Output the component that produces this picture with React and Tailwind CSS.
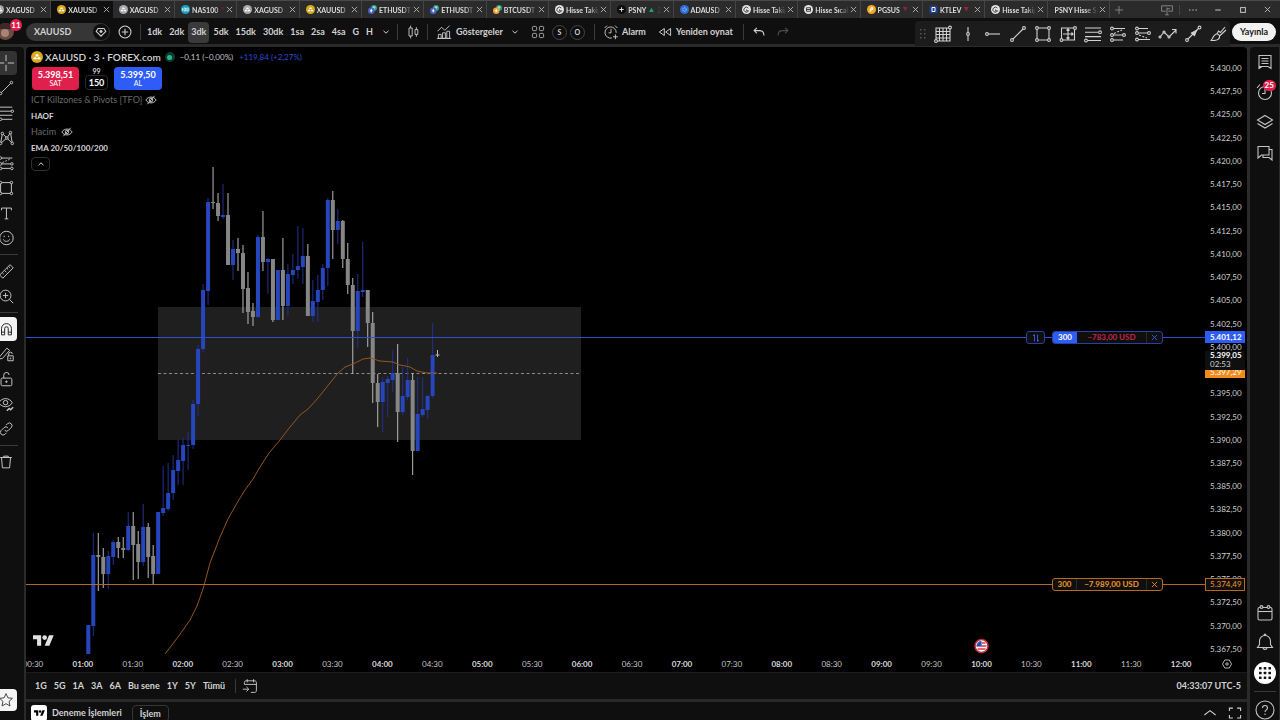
import React, { useState } from 'react';
import clsx from 'clsx';

const TABS = [
    { name: 'XAGUSD', icon: 'silver', trend: 'up' },
    { name: 'XAUUSD', icon: 'gold', trend: 'up', active: true },
    { name: 'XAGUSD', icon: 'silver', trend: 'up' },
    { name: 'NAS100', icon: 'nas', trend: 'down' },
    { name: 'XAGUSD', icon: 'silver', trend: 'up' },
    { name: 'XAUUSD', icon: 'gold', trend: 'up' },
    { name: 'ETHUSDT', icon: 'eth' },
    { name: 'ETHUSDT', icon: 'eth' },
    { name: 'BTCUSDT', icon: 'btc' },
    { name: 'Hisse Takip', icon: 'ring' },
    { name: 'PSNY', icon: 'psny', trend: 'up', extra: '22' },
    { name: 'ADAUSD', icon: 'ada', trend: 'down' },
    { name: 'Hisse Takip', icon: 'ring' },
    { name: 'Hisse Sıcak', icon: 'lines' },
    { name: 'PGSUS', icon: 'pgsus', trend: 'down', extra: '-' },
    { name: 'KTLEV', icon: 'ktlev', trend: 'down', extra: '3' },
    { name: 'Hisse Takip', icon: 'ring' },
    { name: 'PSNY Hisse Sen' },
];

const INTERVALS = ['1dk', '2dk', '3dk', '5dk', '15dk', '30dk', '1sa', '2sa', '4sa', 'G', 'H'];
const RANGES = ['1G', '5G', '1A', '3A', '6A', 'Bu sene', '1Y', '5Y', 'Tümü'];

const PRICES = Array.from({ length: 26 }, (_, i) => {
    const value = (5430 - i * 2.5).toFixed(2);
    return `${value[0]}.${value.slice(1, 4)},${value.slice(5)}`;
});

const TIMES = Array.from({ length: 24 }, (_, i) => {
    const hour = String(Math.floor((i + 1) / 2)).padStart(2, '0');
    return `${hour}:${i % 2 === 0 ? '30' : '00'}`;
});

// [high, body top, body bottom, low, 1 = up / 0 = down]
const CANDLES = [
    [625, 625, 654, 654, 1], [533, 555, 626, 636, 1], [533, 555, 557, 591, 0], [548, 557, 574, 588, 0],
    [551, 556, 574, 589, 1], [540, 542, 557, 565, 1], [537, 542, 548, 558, 0], [537, 548, 550, 558, 0],
    [512, 526, 550, 551, 1], [512, 526, 545, 580, 0], [531, 544, 562, 579, 0], [504, 527, 562, 566, 1],
    [523, 527, 557, 578, 0], [545, 556, 574, 585, 0], [512, 512, 574, 574, 1], [466, 508, 513, 516, 1],
    [463, 493, 509, 511, 1], [455, 470, 493, 500, 1], [440, 460, 471, 485, 1], [438, 445, 461, 485, 1],
    [432, 445, 446, 470, 1], [400, 404, 445, 449, 1], [345, 349, 404, 416, 1], [284, 290, 349, 352, 1],
    [198, 202, 291, 305, 1], [167, 202, 203, 209, 0], [193, 203, 216, 221, 0], [184, 215, 217, 219, 1],
    [193, 215, 265, 265, 0], [240, 249, 265, 280, 1], [238, 249, 253, 271, 0], [245, 253, 289, 313, 0],
    [272, 288, 312, 324, 0], [303, 311, 317, 326, 0], [235, 237, 317, 318, 1], [211, 237, 262, 271, 0],
    [258, 259, 262, 294, 1], [259, 259, 320, 322, 0], [270, 270, 320, 320, 1], [238, 270, 306, 320, 0],
    [264, 274, 306, 316, 1], [254, 270, 275, 284, 1], [226, 266, 270, 279, 1], [228, 256, 267, 284, 1],
    [244, 256, 316, 316, 0], [280, 301, 316, 322, 1], [275, 290, 302, 322, 1], [264, 268, 290, 300, 1],
    [198, 200, 268, 286, 1], [191, 200, 230, 259, 0], [209, 221, 230, 244, 1], [220, 221, 259, 268, 0],
    [243, 259, 285, 294, 0], [278, 285, 331, 374, 0], [274, 291, 331, 348, 1], [242, 290, 292, 297, 1],
    [290, 290, 323, 347, 0], [312, 323, 383, 403, 0], [374, 383, 402, 427, 0], [377, 382, 402, 432, 1],
    [376, 379, 383, 417, 1], [350, 373, 380, 392, 1], [344, 373, 412, 442, 0], [367, 396, 412, 415, 1],
    [358, 380, 397, 400, 1], [373, 380, 451, 475, 0], [377, 414, 451, 451, 1], [377, 409, 415, 417, 1],
    [395, 396, 410, 419, 1], [323, 355, 396, 398, 1],
];

const EMA = [
    [165, 654], [178, 637], [190, 620], [197, 606], [203, 589], [210, 563], [220, 537], [228, 519], [237, 503],
    [245, 490], [253, 479], [260, 467], [269, 453], [280, 440], [290, 427], [300, 415], [308, 409], [318, 398],
    [330, 383], [338, 373], [345, 367], [353, 364], [363, 359], [370, 358], [380, 361], [393, 362], [400, 365],
    [410, 367], [417, 371], [427, 373], [437, 373],
];

const Icon = ({ size = 'size-5', children, className }) => (
    <svg
        viewBox="0 0 20 20"
        className={clsx(size, 'shrink-0', className)}
        fill="none"
        stroke="currentColor"
        strokeWidth="1.1"
        aria-hidden="true"
    >
        {children}
    </svg>
);

const Dot = ({ x, y, r = 1.4 }) => <circle cx={x} cy={y} r={r} fill="#0f0f0f" />;

const Cross = ({ className }) => (
    <svg viewBox="0 0 8 8" className={clsx('size-[7px] shrink-0', className)} stroke="currentColor" fill="none" aria-hidden="true">
        <path d="M1 1l6 6M7 1L1 7" />
    </svg>
);

const Chevron = ({ up }) => (
    <svg viewBox="0 0 8 8" className="size-2 shrink-0" stroke="currentColor" fill="none" aria-hidden="true">
        <path d={up ? 'M1.5 5.2L4 2.8l2.5 2.4' : 'M1.5 2.8L4 5.2l2.5-2.4'} />
    </svg>
);

const Logo = ({ className }) => (
    <svg viewBox="0 0 36 18" className={className} fill="currentColor" aria-hidden="true">
        <path d="M14 18H7V7H0V0h14v18zM28 18h-8l7.500-18h8L28 18z" />
        <circle cx="20" cy="4" r="4" />
    </svg>
);

const Metal = ({ color, className }) => (
    <svg viewBox="0 0 18 18" className={className} aria-hidden="true">
        <circle cx="9" cy="9" r="9" fill={color} />
        <path d="M7.300 5h3.400l1.100 3.200H6.200zM4.300 9.300h3.600l1 3.200H3.200zM10.100 9.300h3.600l1.100 3.200H9.100z" fill="#fff" />
    </svg>
);

const TabIcon = ({ kind }) => {
    const box = 'size-[9px] shrink-0';
    if (kind === 'silver') return <Metal color="#a9a9ad" className={box} />;
    if (kind === 'gold') return <Metal color="#d9a81c" className={box} />;
    return (
        <svg viewBox="0 0 18 18" className={box} aria-hidden="true">
            {kind === 'nas' && (
                <>
                    <circle cx="9" cy="9" r="9" fill="#1a9fc0" />
                    <path d="M3 6v6M6 6h3v6H6zM11.500 6h3v6h-3z" fill="none" stroke="#fff" strokeWidth="1.300" />
                </>
            )}
            {(kind === 'eth' || kind === 'btc') && (
                <>
                    <circle cx="12" cy="6" r="6" fill="#2aa383" />
                    <path d="M9 4h6M12 4v5" stroke="#fff" strokeWidth="1.500" />
                    <circle cx="6.500" cy="11.500" r="6.500" fill={kind === 'eth' ? '#4a63c8' : '#f3a12f'} />
                    <path d="M6.500 7.500l2.500 4-2.500 3.500L4 11.500z" fill="#fff" />
                </>
            )}
            {kind === 'ring' && (
                <>
                    <circle cx="9" cy="9" r="9" fill="#e4e4e4" />
                    <path d="M12.500 6a5 5 0 1 0 .8 5.500H9V9" fill="none" stroke="#333" strokeWidth="1.800" />
                </>
            )}
            {kind === 'lines' && (
                <>
                    <circle cx="9" cy="9" r="9" fill="#e4e4e4" />
                    <path d="M5 5.500h8v7H5zM5 9h8" fill="none" stroke="#333" strokeWidth="1.800" />
                </>
            )}
            {kind === 'psny' && (
                <>
                    <circle cx="9" cy="9" r="9" fill="#0c0c0c" />
                    <path d="M4.500 9h9M9 4.500v9" stroke="#ddd" strokeWidth="2" />
                </>
            )}
            {kind === 'ada' && (
                <>
                    <circle cx="9" cy="9" r="9" fill="#2f6fd6" />
                    <circle cx="9" cy="9" r="3.500" fill="none" stroke="#cfe0ff" strokeWidth="2" strokeDasharray="2 1.500" />
                </>
            )}
            {kind === 'pgsus' && (
                <>
                    <circle cx="9" cy="9" r="9" fill="#f4a720" />
                    <path d="M6 14c1-6 2-9 4-9s3 4-2 5" fill="none" stroke="#fff" strokeWidth="2.200" />
                </>
            )}
            {kind === 'ktlev' && (
                <>
                    <rect x="1" y="1" width="16" height="16" rx="3" fill="#1d3f92" />
                    <path d="M6 5h6v8H6z" fill="none" stroke="#fff" strokeWidth="2" />
                </>
            )}
        </svg>
    );
};

const TitleBar = () => (
    <header className="flex h-[18px] shrink-0 border-t border-[#4a4a4a] bg-[#2b2b2b] text-[#b8b8b8]">
        <div className="-ml-[11px] flex min-w-0 flex-1">
            {TABS.map((tab, idx) => (
                <div
                    key={idx}
                    className={clsx(
                        'flex min-w-0 flex-1 basis-0 items-center gap-px pr-[3px] pl-[6px]',
                        tab.active ? 'bg-[#0f0f0f]' : 'border-r border-[#444]'
                    )}
                >
                    {tab.icon && <TabIcon kind={tab.icon} />}
                    <a
                        href="#"
                        className="flex min-w-0 flex-1 items-center gap-[3px] overflow-hidden mask-r-from-70% pl-px text-[7px] leading-3 font-bold whitespace-nowrap text-[#dedede]"
                    >
                        {tab.name}
                        {tab.trend && (
                            <svg viewBox="0 0 6 6" className="size-[5px] shrink-0" aria-hidden="true">
                                {tab.trend === 'up' ? <path d="M0 6h6L3 1z" fill="#1f9d78" /> : <path d="M0 0h6L3 5z" fill="#e0223c" />}
                            </svg>
                        )}
                        {tab.extra && <span className="font-normal text-[#8a8a8a]">{tab.extra}</span>}
                    </a>
                    <button type="button" aria-label="Sekmeyi kapat"><Cross /></button>
                </div>
            ))}
        </div>
        <div className="flex w-[170px] shrink-0 items-center text-[#8a8a8a]">
            <button type="button" aria-label="Yeni sekme" className="flex w-[18px] justify-center">
                <Icon size="size-2"><path d="M10 0v20M0 10h20" strokeWidth="2.200" /></Icon>
            </button>
            <button type="button" aria-label="Ekran" className="ml-[30px] flex w-[18px] justify-center">
                <Icon size="size-3"><path d="M8 12H1V3h18v9h-7M10 6v12M7 18h6M10 8h5" strokeWidth="1.500" /></Icon>
            </button>
            <span className="ml-[3px] h-2.5 w-px bg-[#444]" />
            <button type="button" aria-label="Menü" className="flex w-[25px] justify-center">
                <Icon size="size-2.5"><path d="M2 10h3M8.500 10h3M15 10h3" strokeWidth="3" /></Icon>
            </button>
            <button type="button" aria-label="Küçült" className="flex w-[25px] justify-center text-[#c4c4c4]">
                <Icon size="size-2"><path d="M3 10h14" strokeWidth="2.500" /></Icon>
            </button>
            <button type="button" aria-label="Büyüt" className="flex w-[25px] justify-center text-[#c4c4c4]">
                <Icon size="size-2"><rect x="4" y="4" width="12" height="12" strokeWidth="2.500" /></Icon>
            </button>
            <button type="button" aria-label="Kapat" className="flex w-[25px] justify-center text-[#c4c4c4]"><Cross /></button>
        </div>
    </header>
);

const GRID_TOOLS = [
    { label: 'Izgara', art: <><path d="M3 4h14v13H3zM6.500 4v13M10 4v13M13.500 4v13M3 7.500h14M3 10.500h14M3 14h14" /><Dot x={17} y={3.500} /><Dot x={3} y={17} /></> },
    { label: 'Dikey çizgi', art: <><path d="M10 3v14" /><Dot x={10} y={10} /></> },
    { label: 'Yatay ışın', art: <><path d="M4 10h13" /><Dot x={4} y={10} /></> },
    { label: 'Trend çizgisi', art: <><path d="M4 16L16 4" /><Dot x={4} y={16} /><Dot x={16} y={4} /></> },
    { label: 'Dikdörtgen', art: <><path d="M4 4h12v12H4z" /><Dot x={4} y={4} /><Dot x={16} y={4} /><Dot x={4} y={16} /><Dot x={16} y={16} /></> },
    { label: 'Fiyat aralığı', art: <><path d="M3.500 4h13v12h-13zM10 5v10M5 10h10M8.500 6.500L10 5l1.500 1.500M8.500 13.500L10 15l1.500-1.500M13.500 8.500L15 10l-1.500 1.500" /><Dot x={17} y={4} /><Dot x={3.500} y={16} /></> },
    { label: 'Fib düzeltmesi', art: <><path d="M2 4h16M2 8.300h13M2 12.600h16M5 16.500h13" /><Dot x={17} y={8.300} /><Dot x={3} y={16.500} /></> },
    { label: 'Uzun pozisyon', art: <><path d="M4 4.500h13M4 11h11M4 16h11" /><path d="M6 9.500l8-3.500" strokeDasharray="2 1.500" /><Dot x={4} y={4.500} /><Dot x={4} y={11} /><Dot x={16} y={11} /><Dot x={4} y={16} /></> },
    { label: 'Kısa pozisyon', art: <><path d="M4 4.500h11M4 9h11M4 15.500h13" /><path d="M6 11l8 3" strokeDasharray="2 1.500" /><Dot x={4} y={4.500} /><Dot x={4} y={9} /><Dot x={16} y={9} /><Dot x={4} y={15.500} /></> },
    { label: 'Yol', art: <><path d="M2 13l4-5 5 5 7-7M14 5.500h4v4" /><Dot x={2} y={13} r={1} /><Dot x={6} y={8} r={1} /><Dot x={11} y={13} r={1} /></> },
    { label: 'Ok', art: <><path d="M4 16L16 4" /><path d="M8.500 9l5-2.500-2 5z" fill="currentColor" /><Dot x={4} y={16} /><Dot x={16.500} y={3.500} /></> },
    { label: 'Fırça', art: <><path d="M2.500 16.500c2 0 2.500-6 6-6.500 3-.3 4 3 2 5-1.500 1.700-5 1.700-8 1.500zM9 10l1.500-3 2 1.500L17 3M11.500 12L18 6" /></> },
];

const Divider = () => <span className="h-4 w-px shrink-0 bg-[#3a3a3a]" />;

const TopToolbar = () => {
    const [interval, setInterval] = useState('3dk');

    return (
        <div className="flex h-[26px] shrink-0 items-center bg-[#0f0f0f] pt-[2px] text-[9px] leading-4 font-bold text-[#d2d2d2]">
            <div className="relative h-full w-[26px] shrink-0">
                <div className="absolute top-[3px] -left-[3px] size-[17px] overflow-hidden rounded-full bg-[#6d4a3f]">
                    <span className="block h-[6px] bg-[#3b2926]" />
                    <span className="ml-1 block size-2 rounded-full bg-[#a88474]" />
                </div>
                <span className="absolute -top-px left-[10px] flex h-3 w-3 items-center justify-center rounded-full bg-[#e0204c] text-[8px] leading-3 text-white">11</span>
            </div>
            <button type="button" className="flex h-[18px] w-[84px] shrink-0 items-center justify-between rounded-full bg-[#363636] pr-px pl-2">
                XAUUSD
                <span className="flex size-4 items-center justify-center rounded-full bg-[#0f0f0f]">
                    <Icon size="size-3"><path d="M5 4h10l3 5-8 8-8-8z" strokeWidth="1.700" /><circle cx="10" cy="9" r="2" fill="currentColor" /></Icon>
                </span>
            </button>
            <button type="button" aria-label="Karşılaştır" className="flex w-[29px] shrink-0 justify-center">
                <Icon size="size-3.5"><circle cx="10" cy="10" r="8.500" strokeWidth="1.500" /><path d="M10 5.500v9M5.500 10h9" strokeWidth="1.500" /></Icon>
            </button>
            <span className="w-px" />
            <Divider />
            <div className="ml-[3px] flex shrink-0 gap-px">
                {INTERVALS.map((item) => (
                    <button
                        key={item}
                        type="button"
                        onClick={() => setInterval(item)}
                        className={clsx('h-[21px] rounded-sm px-[3px]', item === interval && 'bg-[#3a3a3a]')}
                    >
                        {item}
                    </button>
                ))}
            </div>
            <button type="button" aria-label="Zaman aralıkları" className="flex w-5 shrink-0 justify-center"><Chevron /></button>
            <span className="w-px" />
            <Divider />
            <button type="button" aria-label="Mum grafiği" className="flex w-[29px] shrink-0 justify-center">
                <Icon size="size-4"><path d="M5 5h4v10H5zM7 2v3M7 15v3M12.500 7h3.500v6h-3.500zM14.200 4v3M14.200 13v3" /></Icon>
            </button>
            <Divider />
            <button type="button" className="ml-2 flex shrink-0 items-center gap-1">
                <Icon size="size-4"><path d="M2 9l5-5 4 4 6-6M3 18v-5h3.500v5zM8.200 18v-7h3.500v7zM13.500 18V9H17v9zM1 18h18" /></Icon>
                Göstergeler
            </button>
            <button type="button" aria-label="Favori göstergeler" className="flex w-6 shrink-0 justify-center"><Chevron /></button>
            <button type="button" aria-label="Şablonlar" className="ml-[3px] flex w-4 shrink-0 justify-center">
                <Icon size="size-3.5"><rect x="2" y="2" width="6" height="6" rx="1.500" /><rect x="12" y="2" width="6" height="6" rx="1.500" /><rect x="2" y="12" width="6" height="6" rx="1.500" /><rect x="12" y="12" width="6" height="6" rx="1.500" /></Icon>
            </button>
            <button type="button" className="ml-[6px] size-[15px] shrink-0 rounded-full border border-[#444] text-[7px] leading-3">S</button>
            <button type="button" className="mr-[9px] ml-[3px] size-[15px] shrink-0 rounded-full border border-[#444] text-[7px] leading-3">O</button>
            <Divider />
            <button type="button" className="ml-2 flex shrink-0 items-center gap-[3px]">
                <Icon size="size-4"><path d="M16.500 11A7 7 0 1 0 11 17.500M10 6v5H7M2 5l3-3M15 2l3 3M15.500 13v6M12.500 16h6" /></Icon>
                Alarm
            </button>
            <button type="button" className="ml-3 flex shrink-0 items-center gap-1">
                <Icon size="size-3.5"><path d="M9 5v10l-7-5zM18 5v10l-7-5z" strokeWidth="1.400" /></Icon>
                Yeniden oynat
            </button>
            <span className="w-2.5" />
            <Divider />
            <button type="button" aria-label="Geri al" className="ml-2 shrink-0">
                <Icon size="size-3.5"><path d="M7 4L3 8l4 4M3 8h8c4 0 6 3 6 7" strokeWidth="1.500" /></Icon>
            </button>
            <button type="button" aria-label="Yinele" className="ml-2.5 shrink-0 text-[#4d4d4d]">
                <Icon size="size-3.5"><path d="M13 4l4 4-4 4M17 8H9c-4 0-6 3-6 7" strokeWidth="1.500" /></Icon>
            </button>
            <div className="mt-px ml-auto flex h-[25px] shrink-0 items-center self-start rounded-t-sm bg-[#1c1c1c]">
                <svg viewBox="0 0 15 12" className="h-3 w-[15px]" fill="#555" aria-hidden="true">
                    {[1, 5, 9].map((y) => <path key={y} d={`M5 ${y}h1.500v1.500H5zM9 ${y}h1.500v1.500H9z`} />)}
                </svg>
                {GRID_TOOLS.map((tool) => (
                    <button key={tool.label} type="button" aria-label={tool.label} className="flex w-[25px] justify-center">
                        <Icon>{tool.art}</Icon>
                    </button>
                ))}
            </div>
            <button type="button" className="mr-1 ml-[2px] h-[18px] w-[44px] shrink-0 rounded-full bg-[#f2f2f2] text-[#1a1a1a]">Yayınla</button>
        </div>
    );
};

const LEFT_TOOLS = [
    [
        { label: 'İmleç', active: true, art: <path d="M10 1v7M10 12v7M1 10h7M12 10h7" /> },
        GRID_TOOLS[3],
        { label: 'Fib araçları', art: <><path d="M2 3.500h15M2 8h15M2 12.500h15M2 17h15" /><Dot x={17} y={8} /><Dot x={4} y={17} /></> },
        { label: 'Formasyonlar', art: <><path d="M4 16L6 5l5 5 4-6 2 12-6-6-7 6" /><Dot x={4} y={16} /><Dot x={6} y={5} /><Dot x={11} y={10} /><Dot x={15} y={4} /><Dot x={17} y={16} /></> },
        { label: 'Tahmin', art: <><path d="M4 4.500h13M4 11h11M4 16h11" /><path d="M6 9.500l8-3.500" strokeDasharray="2 1.500" /><Dot x={4} y={4.500} /><Dot x={4} y={11} /><Dot x={16.500} y={11} /><Dot x={4} y={16} /><Dot x={16.500} y={16} /></> },
        GRID_TOOLS[4],
        { label: 'Metin', art: <path d="M5 7V4.500h11V7M10.500 4.500v12M8.500 16.500h4" /> },
        { label: 'Simgeler', art: <><circle cx="10.500" cy="10" r="7.500" /><path d="M7 11.500c1 3 6 3 7 0M8 7.500v1.500M13 7.500v1.500" /></> },
    ],
    [
        { label: 'Ölç', art: <path d="M3 14.500L14.500 3 18 6.500 6.500 18zM6 12l1.500 1.500M8.500 9.500l2 2M11 7l1.500 1.500M13 5l1.500 1.500" /> },
        { label: 'Yakınlaştır', art: <><circle cx="9.500" cy="9.500" r="6" /><path d="M14 14l4 4M9.500 6.500v6M6.500 9.500h6" /></> },
    ],
    [
        { label: 'Mıknatıs', inverted: true, art: <path d="M5 16.500V9.500a5.500 5.500 0 0 1 11 0v7h-3.500V9.500a2 2 0 0 0-4 0v7zM5 13.500h3.500M12.500 13.500H16" /> },
        { label: 'Çizim modu', art: <><path d="M3 13L11 3.500l3 2.500-8 9-4 .5zM12 12h6v5.500h-6zM13 12v-2a2 2 0 0 1 4 0" /><Dot x={15} y={15} r={0.5} /></> },
        { label: 'Kilitle', art: <><rect x="4.500" y="9" width="12" height="8.500" rx="1.500" /><path d="M7.500 9V6a3 3 0 0 1 6-.5" /><circle cx="10.500" cy="13" r=".8" fill="currentColor" /></> },
        { label: 'Gizle', art: <><path d="M2 8.500C5.500 2.500 13.500 2.500 17 8.500 13.500 14.500 5.500 14.500 2 8.500z" /><circle cx="9.500" cy="8.500" r="2.500" /><path d="M11 17.500l2.500-2.500 1.500 1.500 3-3" strokeWidth="1.600" /></> },
        { label: 'Bağla', art: <path d="M8.500 11.500a3 3 0 0 0 4.200 0l3.400-3.400a3 3 0 0 0-4.200-4.200L10 5.800M12 8.500a3 3 0 0 0-4.200 0l-3.400 3.400a3 3 0 0 0 4.200 4.200l1.900-1.900" /> },
    ],
    [{ label: 'Sil', art: <path d="M3.500 5h13M7.500 5V3.500h5V5M5 5l1 11.500h8L15 5" /> }],
];

const LeftToolbar = () => (
    <nav className="flex w-6 shrink-0 flex-col overflow-hidden rounded-tr-sm bg-[#0f0f0f] pt-1 text-[#c4c4c4]">
        {LEFT_TOOLS.map((group, idx) => (
            <div key={idx} className="flex flex-col gap-px">
                {idx > 0 && <span className="mt-1 mb-[3px] h-px w-[18px] bg-[#3a3a3a]" />}
                {group.map((tool) => (
                    <button
                        key={tool.label}
                        type="button"
                        aria-label={tool.label}
                        className={clsx(
                            '-ml-[5px] flex h-6 w-[22px] items-center justify-center rounded',
                            tool.active && 'bg-[#333]',
                            tool.inverted && 'bg-[#f4f4f4] text-[#222]'
                        )}
                    >
                        <Icon size="size-[18px]">{tool.art}</Icon>
                    </button>
                ))}
            </div>
        ))}
        <button type="button" aria-label="Favoriler" className="mt-auto mb-[9px] -ml-[5px] flex h-[22px] w-[22px] shrink-0 items-center justify-center rounded bg-[#f4f4f4] text-[#333]">
            <Icon size="size-4"><path d="M10 2l2.400 5.300 5.600.6-4.200 3.900 1.200 5.700-5-2.900-5 2.900 1.200-5.700L2 7.900l5.600-.6z" /></Icon>
        </button>
    </nav>
);

const RightToolbar = () => (
    <aside className="flex w-[30px] shrink-0 flex-col items-center overflow-hidden rounded-tl-sm border-r border-[#2a2a2a] bg-[#0f0f0f] pt-[5px] text-[#c4c4c4]">
        <button type="button" aria-label="İzleme listesi"><Icon><path d="M4 3.500h12v13l-3-2h-9zM4 3.500v13l3-2M6.500 6.500h7M6.500 9h7M6.500 11.500h7" /></Icon></button>
        <button type="button" aria-label="Alarmlar" className="relative mt-[10px]">
            <Icon><circle cx="10" cy="11" r="6.500" /><path d="M10 7v4.500H7M2 6l3-3.500" /></Icon>
            <span className="absolute -top-[2px] left-2 h-[11px] rounded-full bg-[#e0204c] px-[2px] text-[8px] leading-[11px] font-bold text-white">25</span>
        </button>
        <button type="button" aria-label="Nesne ağacı" className="mt-[10px]"><Icon><path d="M10 3.500l7.500 4.500-7.500 4.500L2.500 8zM2.500 11.500L10 16l7.500-4.500" /></Icon></button>
        <button type="button" aria-label="Sohbet" className="mt-[11px]"><Icon><path d="M3 3.500h11v8.500H6.500L3 15zM14 6.500h3V17l-3-2.500H8V12" /></Icon></button>
        <button type="button" aria-label="Takvim" className="mt-auto"><Icon><rect x="3" y="4.500" width="14" height="12.500" rx="1.500" /><path d="M3 8.500h14" /><Dot x={6.500} y={4} /><Dot x={13.500} y={4} /></Icon></button>
        <button type="button" aria-label="Bildirimler" className="mt-[9px]"><Icon><path d="M2.500 15.500h15l-2-3V9a5.500 5.500 0 0 0-11 0v3.500zM9 3.500c0-1.800 2-1.800 2 0M8 15.500c0 2.500 4 2.500 4 0" /></Icon></button>
        <button type="button" aria-label="Uygulamalar" className="mt-[10px] flex size-[22px] shrink-0 items-center justify-center rounded-full bg-white text-[#111]">
            <svg viewBox="0 0 12 12" className="size-3" fill="currentColor" aria-hidden="true">
                {[0, 4.7, 9.4].map((y) => [0, 4.7, 9.4].map((x) => <rect key={`${x}-${y}`} x={x} y={y} width="2.600" height="2.600" rx=".6" />))}
            </svg>
        </button>
        <span className="mt-[7px] h-px w-[22px] shrink-0 bg-[#3a3a3a]" />
        <button type="button" aria-label="Yardım" className="mt-2 h-5 shrink-0"><Icon><circle cx="10" cy="10" r="9" /><path d="M7.500 8c0-3.300 5-3.300 5 0 0 1.800-2.500 2-2.500 4M10 13.500v1.500" /></Icon></button>
    </aside>
);

const HiddenEye = () => (
    <Icon size="size-3" className="text-[#c8c8c8]">
        <path d="M1.500 10C5 3.500 15 3.500 18.500 10 15 16.500 5 16.500 1.500 10z" strokeWidth="1.600" />
        <circle cx="10" cy="10" r="3" strokeWidth="1.600" />
        <path d="M4 17L16 3" strokeWidth="1.600" />
    </Icon>
);

const Legend = () => (
    <div className="absolute top-[3px] left-[5px] flex flex-col items-start text-[#d6d6d6]">
        <div className="flex h-3.5 items-center text-[8px] leading-3.5">
            <Metal color="#d9a81c" className="size-3" />
            <h1 className="ml-[2px] text-[10px] font-semibold">XAUUSD · 3 · FOREX.com</h1>
            <span className="ml-1 flex size-2.5 items-center justify-center rounded-full bg-[#0a3d30]">
                <span className="size-[5px] rounded-full bg-[#2bb58b]" />
            </span>
            <span className="ml-[5px] text-[#c4c4c4]">−0,11 (−0,00%)</span>
            <span className="ml-[6px] text-[#2f4bd0]">+119,84 (+2,27%)</span>
        </div>
        <div className="mt-[3px] ml-px flex gap-[6px] text-center text-white">
            <button type="button" className="h-[23px] w-[47px] rounded bg-[#e0204c] text-[9px] leading-[9px] font-bold">
                5.398,51<span className="block text-[7px] leading-2 font-normal">SAT</span>
            </button>
            <div className="w-[23px] text-[7px] leading-2">
                99
                <button type="button" className="block h-[15px] w-full rounded border border-[#2a2a2a] text-[9px] leading-3 font-bold">150</button>
            </div>
            <button type="button" className="h-[23px] w-12 rounded bg-[#2e5cf6] text-[9px] leading-[9px] font-bold">
                5.399,50<span className="block text-[7px] leading-2 font-normal">AL</span>
            </button>
        </div>
        <div className="mt-[2px] flex h-4 items-center gap-[3px] text-[9px] text-[#6a6a6a]">ICT Killzones &amp; Pivots [TFO]<HiddenEye /></div>
        <div className="flex h-4 items-center text-[8px] font-bold">HAOF</div>
        <div className="flex h-4 items-center gap-[5px] text-[9px] text-[#6a6a6a]">Hacim<HiddenEye /></div>
        <div className="flex h-4 items-center text-[8px] font-bold">EMA 20/50/100/200</div>
        <button type="button" aria-label="Göstergeleri daralt" className="mt-px flex h-3.5 w-[19px] items-center justify-center rounded-sm border border-[#2f2f2f]"><Chevron up /></button>
    </div>
);

// Candle coordinates are in window pixels, the plot begins at (26, 47)
const PlotDrawing = () => (
    <svg className="absolute inset-0 size-full" aria-hidden="true">
        <rect x="132" y="260" width="423" height="133" fill="#1f1f1f" />
        <path d="M132 326.500h423" stroke="#8a8a8a" strokeDasharray="3 2.500" />
        <g transform="translate(-26 -47)">
            {CANDLES.map(([high, top, bottom, low, up], idx) => {
                const x = 88.3 + idx * 4.99;
                return (
                    <g key={idx}>
                        <rect x={x - 0.5} y={high} width="1" height={low - high} fill={up ? '#23308f' : '#b9b9b9'} />
                        <rect x={x - 2} y={top} width="4" height={bottom - top} fill={up ? '#2546bd' : '#868686'} />
                    </g>
                );
            })}
            <path d="M437.500 350v7M435.500 355h4" stroke="#b9b9b9" />
            <polyline points={EMA.map((p) => p.join(',')).join(' ')} fill="none" stroke="#94561f" strokeLinejoin="round" />
        </g>
        <rect x="0" y="290" width="100%" height="1" fill="#2f4fd0" />
        <rect x="0" y="537" width="100%" height="1" fill="#b0692a" />
        <g transform="translate(955.500 599)">
            <circle r="6.500" fill="#fff" stroke="#c22b3e" strokeWidth="1.500" />
            <path d="M-5 0h10M-4 3h8M0-3h4" stroke="#d23a4a" strokeWidth="1.500" />
            <path d="M-5 0a5 5 0 0 1 5-5v5z" fill="#2a50b0" />
        </g>
    </svg>
);

const Position = ({ amount, loss }) => (
    <div
        className={clsx(
            'flex h-[13px] w-[111px] items-stretch overflow-hidden rounded-[3px] border bg-[#0f0f0f] text-center text-[8px] leading-[11px] font-bold',
            loss ? 'border-[#2a3f9e] text-[#c4264a]' : 'border-[#b8691a] text-[#f0952a]'
        )}
    >
        <span className={clsx('w-6', loss ? 'bg-[#2e5cf6] text-white' : 'border-r border-[#2a2a2a]')}>300</span>
        <span className="flex-1">{amount}</span>
        <button type="button" aria-label="Pozisyonu kapat" className={clsx('flex w-4 items-center justify-center border-l border-[#2a2a2a]', loss && 'text-[#3b5fe8]')}>
            <Cross />
        </button>
    </div>
);

const PriceAxis = () => (
    <div className="relative w-[42px] shrink-0 text-[8px] leading-[10px] text-[#cfcfcf]">
        <div className="flex h-full flex-col justify-between pt-4 pb-[2px] pl-[5px]">
            {PRICES.map((price) => <span key={price}>{price}</span>)}
        </div>
        <span className="absolute top-[321px] left-0 h-[10px] w-10 bg-[#f08a1c] pl-[5px] leading-[8px] text-white">5.397,29</span>
        <span className="absolute top-[284px] left-0 h-[12px] w-10 bg-[#2e5cf6] pl-[5px] leading-[12px] font-bold text-white">5.401,12</span>
        <span className="absolute top-[304px] left-0 h-[19px] w-10 bg-[#0f0f0f] pl-[5px] leading-[9px]">
            <b className="block text-white">5.399,05</b>02:53
        </span>
        <span className="absolute top-[531px] left-0 h-[13px] w-10 border border-[#b8691a] bg-[#0f0f0f] pl-1 leading-[11px] text-[#f0952a]">5.374,49</span>
    </div>
);

const Chart = () => (
    <section className="flex min-h-0 flex-1 flex-col overflow-hidden rounded-t-sm bg-black">
        <div className="flex min-h-0 flex-1">
            <div className="relative min-w-0 flex-1 overflow-hidden">
                <PlotDrawing />
                <Legend />
                <div className="absolute top-[284px] right-[42px] flex gap-[7px]">
                    <button type="button" aria-label="Yönü çevir" className="flex h-[13px] w-[19px] items-center justify-center rounded-[3px] border border-[#2a3f9e] bg-[#0f0f0f] text-[#3b5fe8]">
                        <Icon size="size-2.5"><path d="M4 6l3-3v14M13 3v14l3-3" strokeWidth="1.800" /></Icon>
                    </button>
                    <Position amount="−783,00 USD" loss />
                </div>
                <div className="absolute top-[531px] right-[42px]"><Position amount="−7.989,00 USD" /></div>
                <Logo className="absolute bottom-[10px] left-[7px] h-[11px] w-[21px] text-[#e2e2e2]" />
            </div>
            <PriceAxis />
        </div>
        <div className="flex h-4 shrink-0 text-[8px] leading-4 text-[#c4c4c4]">
            <div className="-ml-[18px] flex min-w-0 flex-1">
                {TIMES.map((time, idx) => (
                    <span key={time} className={clsx('min-w-0 flex-1 basis-0 text-center', idx % 2 === 1 && 'font-bold text-[#d8d8d8]')}>{time}</span>
                ))}
            </div>
            <button type="button" aria-label="Ölçek ayarları" className="flex w-[41px] items-center justify-center text-[#c4c4c4]">
                <Icon size="size-2.5"><path d="M5.500 2h9L19 10l-4.500 8h-9L1 10z" strokeWidth="1.800" /><circle cx="10" cy="10" r="2.500" strokeWidth="1.800" /></Icon>
            </button>
        </div>
    </section>
);

const App = () => (
    <div className="flex h-screen min-h-[720px] flex-col overflow-hidden bg-[#2a2a2a] font-['Lato',sans-serif]">
        <TitleBar />
        <TopToolbar />
        <div className="mt-[3px] flex min-h-0 flex-1">
            <LeftToolbar />
            <main className="mr-[3px] ml-[2px] flex min-w-0 flex-1 flex-col">
                <Chart />
                <div className="flex h-[27px] shrink-0 items-center border-t border-[#1c1c1c] bg-[#0f0f0f] px-[6px] text-[9px] font-bold text-[#d2d2d2]">
                    <div className="flex gap-px">
                        {RANGES.map((range) => <button key={range} type="button" className="px-[3px]">{range}</button>)}
                    </div>
                    <span className="mr-[6px] ml-[7px] h-3.5 w-px bg-[#3a3a3a]" />
                    <button type="button" aria-label="Tarihe git">
                        <Icon size="size-4"><path d="M3 8V5.500C3 4 4 3.500 5 3.500h11c1 0 2 1 2 2V16c0 1-1 2-2 2h-5M3 8h15M6.500 1.500v4M14.500 1.500v4M1 14h7M5.500 11L8.500 14l-3 3" /></Icon>
                    </button>
                    <button type="button" className="ml-auto">04:33:07 UTC-5</button>
                </div>
                <div className="mt-[3px] flex h-[18px] shrink-0 items-start overflow-hidden bg-[#0f0f0f] pt-[3px] text-[9px] font-bold text-[#d2d2d2]">
                    <span className="ml-[5px] flex size-4 items-center justify-center rounded-[3px] bg-white text-black">
                        <Logo className="h-[6px] w-[11px]" />
                    </span>
                    <span className="ml-[5px] leading-4">Deneme İşlemleri</span>
                    <button type="button" className="ml-2.5 h-[17px] w-[37px] rounded border border-[#363636] leading-[15px]">İşlem</button>
                    <div className="mr-[5px] ml-auto flex items-center gap-2.5">
                        <button type="button" aria-label="Paneli aç"><Icon size="size-4"><path d="M3 12.500L10 7l7 5.500" strokeWidth="1.300" /></Icon></button>
                        <button type="button" aria-label="Tam ekran"><Icon size="size-3.5"><path d="M2 7V3h5M13 3h5v4M2 13v4h5M13 17h5v-4" strokeWidth="1.500" /></Icon></button>
                    </div>
                </div>
            </main>
            <RightToolbar />
        </div>
    </div>
);

export default App;
